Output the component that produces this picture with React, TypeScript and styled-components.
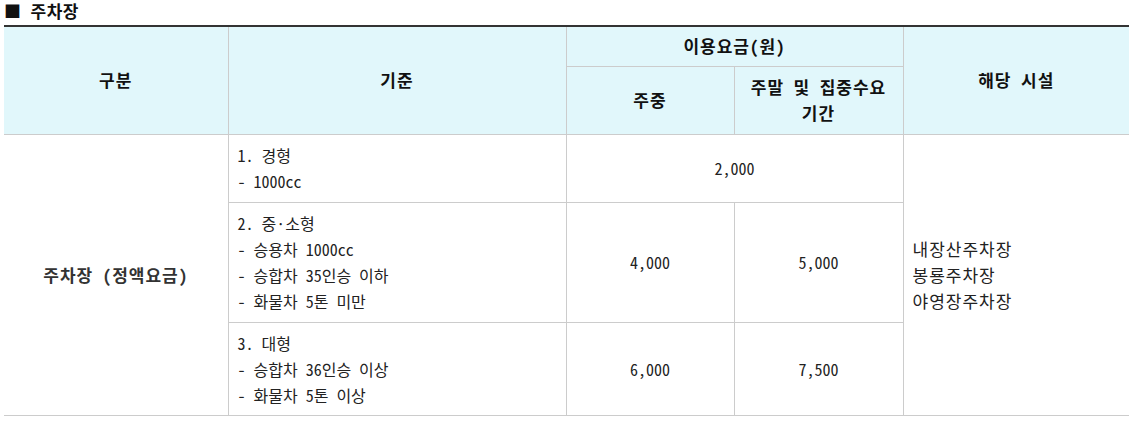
import React from "react";
import styled, { createGlobalStyle } from "styled-components";

const Global = createGlobalStyle`
  html, body { margin: 0; padding: 0; background: #fff; }
  body {
    font-family: "Noto Sans Mono CJK KR", "Noto Sans CJK KR", "Noto Sans", sans-serif;
    color: #222;
  }
`;

const Page = styled.div`
  padding: 0 8px 0 4px;
`;

const Title = styled.h3`
  margin: 0;
  height: 25px;
  font-size: 17px;
  letter-spacing: 0.5px;
  line-height: 22px;
  font-weight: 700;
  color: #111;
`;

const Table = styled.table`
  width: 1125px;
  border-collapse: collapse;
  table-layout: fixed;
  border-top: 2px solid #333;
  border-bottom: 1px solid #ccc;
  font-size: 16px;
`;

const Th = styled.th`
  background: #e1f7fb;
  border: 1px solid #ccc;
  border-top: none;
  font-size: 17px;
  letter-spacing: 1px;
  font-weight: 700;
  color: #111;
  line-height: 26px;
  padding: 6px 10px;
  text-align: center;
  vertical-align: middle;
  &:first-child { border-left: none; }
  &:last-child { border-right: none; }
`;

const Td = styled.td<{ $align?: "left" | "center"; $large?: boolean; $bold?: boolean }>`
  border: 1px solid #ccc;
  color: ${(p) => (p.$bold ? "#333" : "#222")};
  font-size: ${(p) => (p.$large ? "17px" : "16px")};
  letter-spacing: ${(p) => (p.$large ? "1px" : "0")};
  line-height: 26px;
  padding: 7px 9px;
  text-align: ${(p) => p.$align ?? "center"};
  font-weight: ${(p) => (p.$bold ? 700 : 400)};
  vertical-align: middle;
  &.first { border-left: none; }
  &.last { border-right: none; }
`;

const Line = styled.div`
  white-space: nowrap;
`;

const Lines = ({ items }: { items: string[] }) => (
  <>
    {items.map((t, i) => (
      <Line key={i}>{t}</Line>
    ))}
  </>
);

export default function App() {
  return (
    <Page>
      <Global />
      <Title>■ 주차장</Title>
      <Table>
        <colgroup>
          <col style={{ width: 224 }} />
          <col style={{ width: 338 }} />
          <col style={{ width: 168 }} />
          <col style={{ width: 169 }} />
          <col style={{ width: 226 }} />
        </colgroup>
        <thead>
          <tr style={{ height: 40 }}>
            <Th rowSpan={2}>구분</Th>
            <Th rowSpan={2}>기준</Th>
            <Th colSpan={2}>이용요금(원)</Th>
            <Th rowSpan={2}>해당 시설</Th>
          </tr>
          <tr style={{ height: 68 }}>
            <Th>주중</Th>
            <Th>
              주말 및 집중수요
              <br />
              기간
            </Th>
          </tr>
        </thead>
        <tbody>
          <tr style={{ height: 68 }}>
            <Td rowSpan={3} $bold $large className="first">
              주차장 (정액요금)
            </Td>
            <Td $align="left">
              <Lines items={["1. 경형", "- 1000cc"]} />
            </Td>
            <Td colSpan={2}>2,000</Td>
            <Td rowSpan={3} $align="left" $large className="last">
              <Lines items={["내장산주차장", "봉룡주차장", "야영장주차장"]} />
            </Td>
          </tr>
          <tr style={{ height: 120 }}>
            <Td $align="left">
              <Lines items={["2. 중·소형", "- 승용차 1000cc", "- 승합차 35인승 이하", "- 화물차 5톤 미만"]} />
            </Td>
            <Td>4,000</Td>
            <Td>5,000</Td>
          </tr>
          <tr style={{ height: 92 }}>
            <Td $align="left">
              <Lines items={["3. 대형", "- 승합차 36인승 이상", "- 화물차 5톤 이상"]} />
            </Td>
            <Td>6,000</Td>
            <Td>7,500</Td>
          </tr>
        </tbody>
      </Table>
    </Page>
  );
}
